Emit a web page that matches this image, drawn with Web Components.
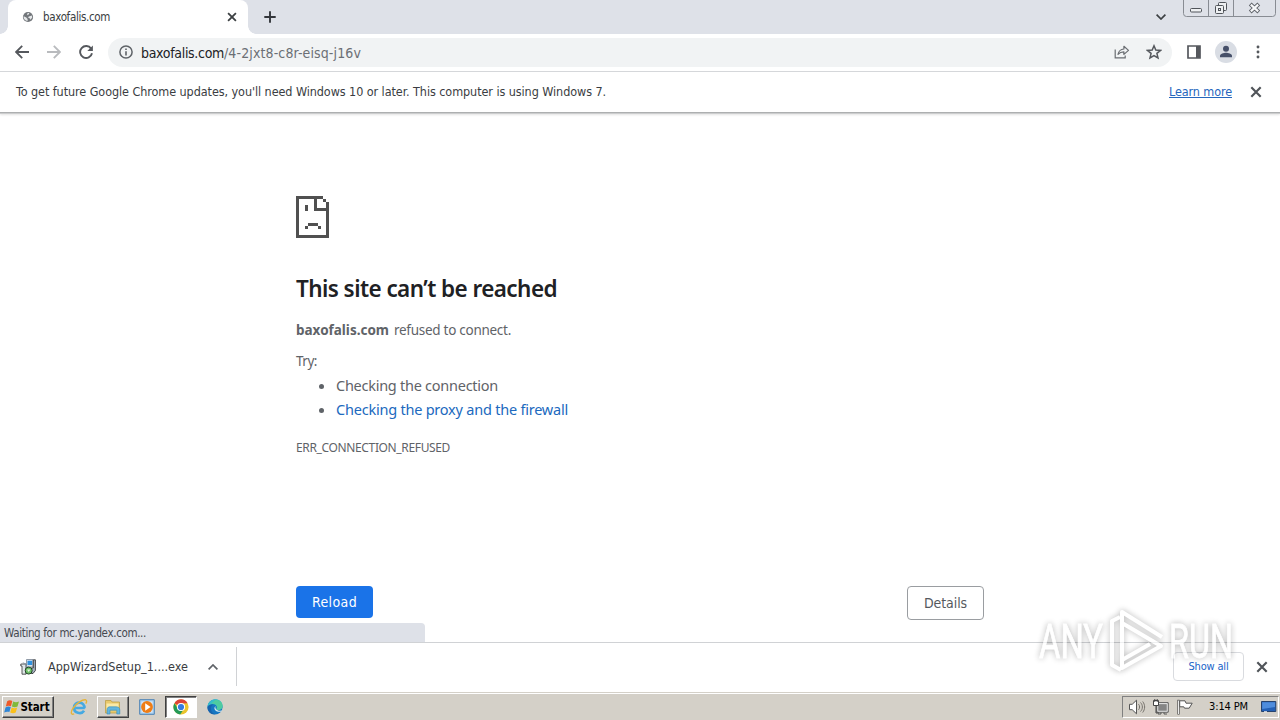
<!DOCTYPE html>
<html lang="en">
<head>
<meta charset="utf-8">
<title>baxofalis.com</title>
<style>
    html, body { margin: 0; height: 100%; }
    body {
        font-family: "DejaVu Sans Condensed", "DejaVu Sans", sans-serif;
        font-stretch: condensed;
        background: #fff;
        overflow: hidden;
    }
</style>
</head>
<body>
<desktop-screen></desktop-screen>
<script>
// Builds a shadow root from a markup string.
class BaseElement extends HTMLElement {
    constructor() {
        super();
        const template = document.createElement('template');
        template.innerHTML = this.constructor.markup;
        this.attachShadow({ mode: 'open' });
        this.shadowRoot.appendChild(template.content.cloneNode(true));
    }
}

// One line of text, tracked so that it fills the given width.
class FitText extends BaseElement {
    static get markup() {
        return `
        <style>
            :host { display: block; white-space: nowrap; flex: none; }
            span { display: inline-block; vertical-align: top; text-decoration: inherit; }
        </style>
        <span><slot></slot></span>`;
    }
    connectedCallback() {
        requestAnimationFrame(() => this._fit());
        this._fit();
    }
    _fit() {
        const target = parseFloat(this.getAttribute('width'));
        const span = this.shadowRoot.querySelector('span');
        span.style.letterSpacing = '0';
        const natural = span.getBoundingClientRect().width;
        if (!target || !natural) return;
        span.style.letterSpacing = (target - natural) / this.textContent.length + 'px';
        this.style.width = target + 'px';
    }
}
customElements.define('fit-text', FitText);

const ICONS = {
    globe: ['0 0 12 12', '<circle cx="6" cy="6" r="5.1" fill="#73777b"/><path d="M1.6 5.2 4.3 6.4 5.6 8v2.1A4.3 4.3 0 0 1 1.6 5.2ZM6.8 5.4 9.8 4.4 10.3 6.5 8.4 8.8 7.6 7.2 6 6.6Z" fill="#e5e7e9"/><path d="M5.6 2 7.4 2.1 6.7 3.5 5 4.2Z" fill="#e5e7e9"/>'],
    close: ['0 0 10 10', '<path d="M1.1 1.1 8.9 8.9M8.9 1.1 1.1 8.9" stroke="currentColor" stroke-width="1.8" fill="none"/>'],
    plus: ['0 0 12 12', '<path d="M6 .3V11.7M.3 6H11.7" stroke="#33363b" stroke-width="1.9"/>'],
    down: ['0 0 10 6', '<path d="M.6.6 5 5 9.4.6" fill="none" stroke="#3c4043" stroke-width="1.7"/>'],
    up: ['0 0 10 6', '<path d="M.6 5.4 5 1 9.4 5.4" fill="none" stroke="#5f6368" stroke-width="1.7"/>'],
    back: ['0 0 14 14', '<path d="M14 7H1.2M7.2.8 1.1 7 7.2 13.2" fill="none" stroke="#55585d" stroke-width="1.8"/>'],
    forward: ['0 0 14 14', '<path d="M0 7H12.8M6.8.8 12.9 7 6.8 13.2" fill="none" stroke="#b9bbbe" stroke-width="1.8"/>'],
    reload: ['0 0 14 14', '<path d="M12.1 3.6A6 6 0 1 0 13 8.3" fill="none" stroke="#55585d" stroke-width="1.9"/><path d="M13.9.4V6H8.3Z" fill="#55585d"/>'],
    info: ['0 0 14 14', '<circle cx="7" cy="7" r="6.1" fill="none" stroke="#5f6368" stroke-width="1.5"/><path d="M7 6.2V10.4M7 3.5V5" stroke="#5f6368" stroke-width="1.6"/>'],
    share: ['0 0 16 14', '<path d="M1.2 4.6V12.8H11.2V10.5" fill="none" stroke="#6a6d72" stroke-width="1.2"/><path d="M4 9.4C4.7 6 6.7 4.2 9.9 4V1.3L14.5 5.4 9.9 9.4V6.8C7.4 6.8 5.7 7.4 4 9.4Z" fill="none" stroke="#6a6d72" stroke-width="1.2" stroke-linejoin="round"/>'],
    star: ['0 0 16 16', '<path d="M8 1.8 9.8 6 14.5 6.4 10.9 9.4 12 13.9 8 11.5 4 13.9 5.1 9.4 1.5 6.4 6.2 6Z" fill="none" stroke="#55585d" stroke-width="1.5"/>'],
    panel: ['0 0 14 14', '<path d="M1 1H13V13H1Z" fill="none" stroke="#55585d" stroke-width="1.7"/><path d="M9 1H13V13H9Z" fill="#55585d"/>'],
    avatar: ['0 0 22 22', '<circle cx="11" cy="11" r="11" fill="#d9dde4"/><circle cx="11" cy="7.8" r="3" fill="#465069"/><path d="M5 16.2V14.8C5 12.6 8.9 11.7 11 11.7S17 12.6 17 14.8V16.2Z" fill="#465069"/>'],
    dots: ['0 0 4 14', '<circle cx="2" cy="2" r="1.45" fill="#55585d"/><circle cx="2" cy="7" r="1.45" fill="#55585d"/><circle cx="2" cy="12" r="1.45" fill="#55585d"/>'],
    // Page with a folded corner and a sad face
    sad: ['0 0 33 42', '<g fill="#505050" shape-rendering="crispEdges"><path d="M0 0H27V3H3V39H30V15H18V3H21V12H30V9H33V42H0Z"/><path d="M27 3H30V6H27ZM30 6H33V12H30ZM9 9H12V15H9ZM12 27H22V30H12ZM9 30H12V33H9ZM22 30H25V33H22Z"/></g>'],
    setup: ['0 0 16 16', '<path d="M6.5.5H13V8H6.5Z" fill="#d9e2ea" stroke="#7a8594" stroke-width=".8"/><path d="M7.5 1.8H12.2V6H7.5Z" fill="#2f91df"/><path d="M13.3.8H15.4V11.5L13 14.5H11.5V9H13.3Z" fill="#a6b3c2" stroke="#222" stroke-width=".8"/><path d="M.8 5H6V15.2H2V7H.8Z" fill="#dfe6e9" stroke="#333" stroke-width=".8"/><path d="M2.8 3.8 6 5V8H8.5" fill="none" stroke="#8b97a4"/><circle cx="8.7" cy="11.6" r="3.5" fill="#6fc069" stroke="#1b351f" stroke-width=".9"/><path d="M7 10.6H10.4L8.7 13Z" fill="#e9f5e4"/>'],
    windows: ['0 0 16 16', '<path d="M3.2 2.2C5 1 6.6 1.2 8.3 2L7 7.2C5.2 6.5 3.6 6.5 1.8 7.5Z" fill="#ef5a28"/><path d="M9.2 2.5C11 3.4 12.8 3.5 15 2.4L13.5 7.5C11.6 8.6 9.8 8.4 7.9 7.5Z" fill="#80b93a"/><path d="M1.5 8.5C3.3 7.4 5 7.4 6.8 8.1L5.4 13.1C3.7 12.4 2 12.5.2 13.5Z" fill="#2f86d6"/><path d="M7.7 8.5C9.5 9.4 11.3 9.5 13.2 8.5L11.7 13.6C9.8 14.6 8.1 14.4 6.2 13.5Z" fill="#fac01b"/>'],
    ie: ['0 0 18 18', '<path d="M14.8 10H5.5M14.4 10.2C15 3 4.2 2.8 4 9.7 3.9 15.2 11.4 16.7 14.1 12.8" fill="none" stroke="#45a9e2" stroke-width="2.7"/><path d="M4.2 15.8C.6 17.4.4 13.8 3.2 10 6.5 5.2 12.5 1.2 15.6 1.8 17 2.2 16.8 4 15.8 5.6" fill="none" stroke="#e5b43a" stroke-width="1.4"/>'],
    folder: ['0 0 18 18', '<path d="M1.5 2.5H7L8 4H15.5V15H1.5Z" fill="#e9c96c" stroke="#b9993e" stroke-width=".7"/><path d="M2.5 5.5H14.5V12H2.5Z" fill="#fae9a6"/><path d="M3 16V11.5C3 9.2 5 8.8 6 8.8H12C14 8.8 15.8 9.5 15.8 12V16H12.8V12.2H6V16Z" fill="#62b6df" stroke="#398bb5" stroke-width=".6"/>'],
    media: ['0 0 16 16', '<path d="M.7.7H15.3V15.3H.7Z" fill="#a9d0ef" stroke="#4c82b4"/><path d="M2.5 2.5H13.5V13.5H2.5Z" fill="#dceafa"/><circle cx="8" cy="8" r="5.9" fill="#ee7d16"/><path d="M6.2 4.3 11.6 8 6.2 11.7Z" fill="#fff"/>'],
    chrome: ['0 0 16 16', '<circle cx="8" cy="8" r="7.6" fill="#eac42d"/><path d="M8 8 1.4 4.2A7.6 7.6 0 0 1 14.6 4.2L8 4.5Z" fill="#dc4437"/><path d="M1.4 4.2A7.6 7.6 0 0 0 7.2 15.6L11 9.8 5 9.8Z" fill="#249957"/><circle cx="8" cy="8" r="4.1" fill="#fff"/><circle cx="8" cy="8" r="3.1" fill="#347ce0"/>'],
    edge: ['0 0 16 16', '<circle cx="8" cy="8" r="7.6" fill="#1676c2"/><path d="M.5 8C1.1-2 15.5-2.2 15.6 7.1 15.6 10.8 11 12 9.2 10.2 10.7 8.4 9.7 5.6 6.6 5.3 3.6 5 1.1 6.2.5 8Z" fill="#36bdca"/><path d="M8.5 1C13 .5 15.6 3.8 15.6 7.1 15.6 10.8 11 12 9.2 10.2 11.6 7.7 9 4.2 4 4.5Z" fill="#58d28e" opacity=".7"/><path d="M9.2 10.2C7.8 9 8.4 7.5 9 7 7.3 7.6 6.8 9.6 8.2 11.2 9.8 12.8 12.4 13.1 14.3 12.4 15 12 14.8 11.4 14.3 11.4 12.5 12 10.5 11.6 9.2 10.2Z" fill="#d5e9ee"/><path d="M6.9 5.3C3 6.5 2.5 12.8 8.1 15.5 3 15.5.3 11.9.5 8 1.6 5.8 4.4 5 6.9 5.3Z" fill="#1763ad"/>'],
    speaker: ['0 0 18 16', '<path d="M1.5 5.3H4.2L8.5 1.2V14.8L4.2 10.7H1.5Z" fill="#fff" stroke="#555" stroke-width="1"/><path d="M10.5 5.2C12 6.6 12 9.4 10.5 10.8M12.5 3.5C15 6 15 10 12.5 12.5M14.7 2.5C17.3 6 17.3 10 14.7 13.5" fill="none" stroke="#77736d" stroke-width="1"/>'],
    network: ['0 0 18 16', '<path d="M4.8 3.7H16.2V13.2H4.8Z" fill="#fff" stroke="#444" stroke-width=".9"/><path d="M6.2 5.1H14.8V11.8H6.2Z" fill="#858585"/><path d="M9 13.5V15H6M12 13.5V15H15" fill="none" stroke="#555"/><path d="M1.5 1.5H6.5V6.5H1.5Z" fill="#fff" stroke="#444"/><path d="M4 6.5V14H7" fill="none" stroke="#444" stroke-width="1"/><path d="M2.8 0V3M5.2 0V3" stroke="#444"/>'],
    flag: ['0 0 18 16', '<path d="M2.5.8V15.5" stroke="#444" stroke-width="2.2"/><path d="M2.5 1.5V15" stroke="#fff" stroke-width=".9"/><path d="M3.7 1.8H9L10 4.2H16.2L13.2 9.2H8.5L7.8 7.8H3.7Z" fill="#fff" stroke="#555"/>'],
    monitor: ['0 0 16 14', '<path d="M.5 1.5H14.8V11.5H.5Z" fill="#2360b5" stroke="#27436d"/><path d="M1.2 2.2H14V7L1.2 9Z" fill="#4f8ddc"/><path d="M3 11.8H6" stroke="#fff"/>'],
    controls: ['0 0 94 18', '<path d="M.5 0V13.5Q.5 16.5 3.5 16.5H89.5Q92.5 16.5 92.5 13.5V0M25.5 0V16M50.5 0V16" fill="none" stroke="#888c93"/><g fill="#eef0f2" stroke="#50545a" stroke-width="1"><rect x="7.5" y="8.5" width="11" height="3.5" rx="1"/><rect x="35.5" y="2.5" width="8" height="8" rx="1"/><rect x="32.5" y="5.5" width="8" height="8" rx="1"/><rect x="35.5" y="8.5" width="2" height="2"/></g><path d="M67.2 4 75.8 12M75.8 4 67.2 12" stroke="#5c6066" stroke-width="4"/><path d="M67.8 4.6 75.2 11.4M75.2 4.6 67.8 11.4" stroke="#f6f7f9" stroke-width="2.2"/>']
};

class UiIcon extends HTMLElement {
    connectedCallback() {
        const [box, body] = ICONS[this.getAttribute('name')];
        const size = box.split(' ');
        const width = this.getAttribute('width') || size[2];
        const height = width * size[3] / size[2];
        this.attachShadow({ mode: 'open' });
        this.shadowRoot.innerHTML = `
            <style>
                :host { display: block; flex: none; }
                svg { display: block; }
            </style>
            <svg width="${width}" height="${height}" viewBox="${box}">${body}</svg>`;
    }
}
customElements.define('ui-icon', UiIcon);

class TabStrip extends BaseElement {
    static get markup() {
        return `
        <style>
            :host { display: flex; flex: none; height: 34px; background: #dee1e8; color: #202124; padding-left: 8px; box-sizing: border-box; }
            .tab { position: relative; width: 240px; box-sizing: border-box; display: flex; align-items: center; background: #fff; border-radius: 8px 8px 0 0; padding: 0 11px 0 14px; }
            .tab::before, .tab::after { content: ""; position: absolute; bottom: 0; width: 8px; height: 8px; }
            .tab::before { left: -8px; background: radial-gradient(circle at 0 0, transparent 7.5px, #fff 8px); }
            .tab::after { right: -8px; background: radial-gradient(circle at 100% 0, transparent 7.5px, #fff 8px); }
            fit-text { margin-left: 9px; font-size: 11.5px; line-height: 16px; color: #3a3d41; }
            .close { margin-left: auto; color: #3c4043; }
            .add { margin: 11px 0 0 16px; }
            .search { margin: 14px 17px 0 auto; }
            .controls { margin-right: 3px; }
        </style>
        <div class="tab">
            <ui-icon name="globe"></ui-icon>
            <fit-text width="67">baxofalis.com</fit-text>
            <ui-icon class="close" name="close"></ui-icon>
        </div>
        <ui-icon class="add" name="plus"></ui-icon>
        <ui-icon class="search" name="down"></ui-icon>
        <ui-icon class="controls" name="controls"></ui-icon>`;
    }
}
customElements.define('tab-strip', TabStrip);

class NavToolbar extends BaseElement {
    static get markup() {
        return `
        <style>
            :host { display: flex; flex: none; align-items: center; height: 38px; padding: 0 20px 1px 15px; box-sizing: border-box; border-bottom: 1px solid #d5d7da; }
            .forward, .reload { margin-left: 18px; }
            .omnibox { flex: 1; display: flex; align-items: center; height: 29px; margin: 0 15px 0 15px; padding: 0 10px 0 11px; border-radius: 15px; background: #f1f3f4; }
            fit-text { font-size: 14px; line-height: 20px; padding-top: 1px; color: #202124; }
            .host { margin-left: 8px; }
            .path { color: #6b6f74; }
            .share { margin: 0 16px 0 auto; }
            .avatar { margin-left: 14px; }
            .dots { margin-left: 19px; }
        </style>
        <ui-icon name="back"></ui-icon>
        <ui-icon class="forward" name="forward"></ui-icon>
        <ui-icon class="reload" name="reload"></ui-icon>
        <div class="omnibox">
            <ui-icon name="info"></ui-icon>
            <fit-text class="host" width="83">baxofalis.com</fit-text>
            <fit-text class="path" width="137">/4-2jxt8-c8r-eisq-j16v</fit-text>
            <ui-icon class="share" name="share"></ui-icon>
            <ui-icon name="star"></ui-icon>
        </div>
        <ui-icon name="panel"></ui-icon>
        <ui-icon class="avatar" name="avatar"></ui-icon>
        <ui-icon class="dots" name="dots"></ui-icon>`;
    }
}
customElements.define('nav-toolbar', NavToolbar);

class InfoBar extends BaseElement {
    static get markup() {
        return `
        <style>
            :host { display: flex; flex: none; align-items: center; height: 40px; padding: 0 18px 0 16px; box-sizing: border-box; font-size: 12.5px; line-height: 18px; color: #3a3d42; box-shadow: 0 1px 0 #adafb0, 0 2px 0 #cccdce, 0 3px 2px #e4e4e4; }
            .link { margin-left: auto; color: #2566bd; text-decoration: underline; }
            ui-icon { margin-left: 18px; color: #505459; }
        </style>
        <fit-text width="590">To get future Google Chrome updates, you'll need Windows 10 or later. This computer is using Windows 7.</fit-text>
        <fit-text class="link" width="63">Learn more</fit-text>
        <ui-icon name="close" width="12"></ui-icon>`;
    }
}
customElements.define('info-bar', InfoBar);

class ErrorPage extends BaseElement {
    static get markup() {
        return `
        <style>
            :host { display: block; flex: 1; min-height: 0; color: #5f6368; }
            .main { width: 688px; margin: 0 auto; padding-top: 84px; font-family: "Noto Sans", sans-serif; font-stretch: normal; }
            h1 { margin: 36px 0 0; font-size: 22.5px; line-height: 30px; font-weight: 600; color: #202124; }
            .message { display: flex; gap: 5px; margin-top: 16px; font-size: 13.5px; line-height: 20px; }
            .try { margin-top: 11px; font-size: 13.5px; line-height: 20px; }
            ul { margin: 2px 0 0; padding: 0 0 0 40px; font-size: 14.5px; line-height: 24px; }
            li fit-text { line-height: 24px; }
            .link { color: #2069be; }
            .code { margin-top: 18px; font-size: 12px; line-height: 18px; }
            .buttons { display: flex; justify-content: space-between; margin-top: 129px; font-family: "DejaVu Sans Condensed", sans-serif; font-stretch: condensed; font-size: 14px; }
            .button { display: flex; align-items: center; justify-content: center; width: 77px; height: 32px; border-radius: 4px; background: #1a73e8; color: #fff; }
            .outline { width: 75px; border: 1px solid #9a9da1; background: #fff; color: #55595e; }
        </style>
        <div class="main">
            <ui-icon name="sad"></ui-icon>
            <h1><fit-text width="261">This site can’t be reached</fit-text></h1>
            <div class="message">
                <fit-text width="93" style="font-weight: 700">baxofalis.com</fit-text>
                <fit-text width="117">refused to connect.</fit-text>
            </div>
            <fit-text class="try" width="21">Try:</fit-text>
            <ul>
                <li><fit-text width="162">Checking the connection</fit-text></li>
                <li><fit-text class="link" width="232">Checking the proxy and the firewall</fit-text></li>
            </ul>
            <fit-text class="code" width="154">ERR_CONNECTION_REFUSED</fit-text>
            <div class="buttons">
                <div class="button"><fit-text width="45">Reload</fit-text></div>
                <div class="button outline"><fit-text width="43">Details</fit-text></div>
            </div>
        </div>`;
    }
}
customElements.define('error-page', ErrorPage);

class StatusBubble extends BaseElement {
    static get markup() {
        return `
        <style>
            :host { position: absolute; left: 0; bottom: 78px; width: 425px; height: 19px; box-sizing: border-box; padding: 1px 0 0 4px; background: #dee1e8; border-radius: 0 4px 0 0; font-size: 11.5px; line-height: 18px; color: #454950; }
        </style>
        <fit-text width="142">Waiting for mc.yandex.com...</fit-text>`;
    }
}
customElements.define('status-bubble', StatusBubble);

class DownloadShelf extends BaseElement {
    static get markup() {
        return `
        <style>
            :host { display: flex; flex: none; align-items: center; height: 50px; box-sizing: border-box; padding: 0 12px 2px 0; border-top: 1px solid #d0d2d5; }
            .item { display: flex; align-items: center; width: 237px; height: 39px; box-sizing: border-box; padding: 0 18px 0 20px; border-right: 1px solid #d0d2d5; }
            .item fit-text { margin-left: 12px; font-size: 12.5px; color: #3a3d42; }
            .item .up { margin-left: auto; }
            .all { display: flex; align-items: center; justify-content: center; width: 71px; height: 29px; box-sizing: border-box; margin: 0 12px 0 auto; border: 1px solid #d9dbdf; border-radius: 4px; font-size: 11px; color: #1a64c8; }
            .close { color: #505459; }
        </style>
        <div class="item">
            <ui-icon name="setup"></ui-icon>
            <fit-text width="140">AppWizardSetup_1....exe</fit-text>
            <ui-icon class="up" name="up"></ui-icon>
        </div>
        <div class="all"><fit-text width="40">Show all</fit-text></div>
        <ui-icon class="close" name="close" width="12"></ui-icon>`;
    }
}
customElements.define('download-shelf', DownloadShelf);

class TaskBar extends BaseElement {
    static get markup() {
        return `
        <style>
            :host { display: flex; flex: none; align-items: center; height: 28px; box-sizing: border-box; padding: 2px 1px 2px 2px; background: #d4d0c8; border-top: 1px solid #d4d0c8; box-shadow: inset 0 1px 0 #fff; color: #000; }
            .raised, .pressed { display: flex; align-items: center; justify-content: center; height: 22px; box-sizing: border-box; border: 1px solid; }
            .raised { border-color: #fff #404040 #404040 #fff; box-shadow: inset -1px -1px 0 #808080; }
            .pressed { border-color: #404040 #fff #fff #404040; box-shadow: inset 1px 1px 0 #808080; background: #fff; }
            .start { width: 52px; padding-right: 3px; gap: 1px; font-size: 11.5px; font-weight: 700; }
            .tray { display: flex; align-items: center; width: 157px; height: 22px; box-sizing: border-box; margin-left: auto; padding: 0 1px 0 5px; border: 1px solid; border-color: #808080 #fff #fff #808080; font-size: 11px; }
        </style>
        <div class="raised start"><ui-icon name="windows"></ui-icon><fit-text width="29">Start</fit-text></div>
        <ui-icon name="ie" width="18" style="margin-left: 16px"></ui-icon>
        <div class="raised" style="width: 32px; margin-left: 9px"><ui-icon name="folder"></ui-icon></div>
        <ui-icon name="media" style="margin-left: 10px"></ui-icon>
        <div class="pressed" style="width: 32px; margin-left: 10px"><ui-icon name="chrome"></ui-icon></div>
        <ui-icon name="edge" style="margin-left: 10px"></ui-icon>
        <div class="tray">
            <ui-icon name="speaker"></ui-icon>
            <ui-icon name="network" style="margin-left: 6px"></ui-icon>
            <ui-icon name="flag" style="margin-left: 6px"></ui-icon>
            <fit-text width="39" style="margin-left: 15px">3:14 PM</fit-text>
            <ui-icon name="monitor" style="margin-left: auto"></ui-icon>
        </div>`;
    }
}
customElements.define('task-bar', TaskBar);

class WaterMark extends BaseElement {
    static get markup() {
        return `
        <style>
            :host { position: absolute; left: 1030px; top: 600px; width: 214px; height: 84px; pointer-events: none; opacity: .65; }
            svg { display: block; filter: drop-shadow(0 0 3px rgba(0, 0, 0, .45)); }
            text { font: 48px "Liberation Sans Narrow", Roboto, sans-serif; stroke: #fff; stroke-width: .8px; }
        </style>
        <svg width="214" height="84" viewBox="0 0 214 84" fill="#fff">
            <text x="9" y="58" textLength="64" lengthAdjust="spacingAndGlyphs">ANY</text>
            <text x="139" y="58" textLength="64" lengthAdjust="spacingAndGlyphs">RUN</text>
            <path d="M92 54V12L132 37M92 23 131 46 92 68V54M120 44 92 60M90 17 82 21V65L91 70" fill="none" stroke="#fff" stroke-width="4" stroke-linejoin="round"/>
        </svg>`;
    }
}
customElements.define('water-mark', WaterMark);

class DesktopScreen extends BaseElement {
    static get markup() {
        return `
        <style>
            :host { position: relative; display: flex; flex-direction: column; width: 1280px; height: 720px; overflow: hidden; background: #fff; }
        </style>
        <tab-strip></tab-strip>
        <nav-toolbar></nav-toolbar>
        <info-bar></info-bar>
        <error-page></error-page>
        <download-shelf></download-shelf>
        <task-bar></task-bar>
        <status-bubble></status-bubble>
        <water-mark></water-mark>`;
    }
}
customElements.define('desktop-screen', DesktopScreen);
</script>
</body>
</html>
